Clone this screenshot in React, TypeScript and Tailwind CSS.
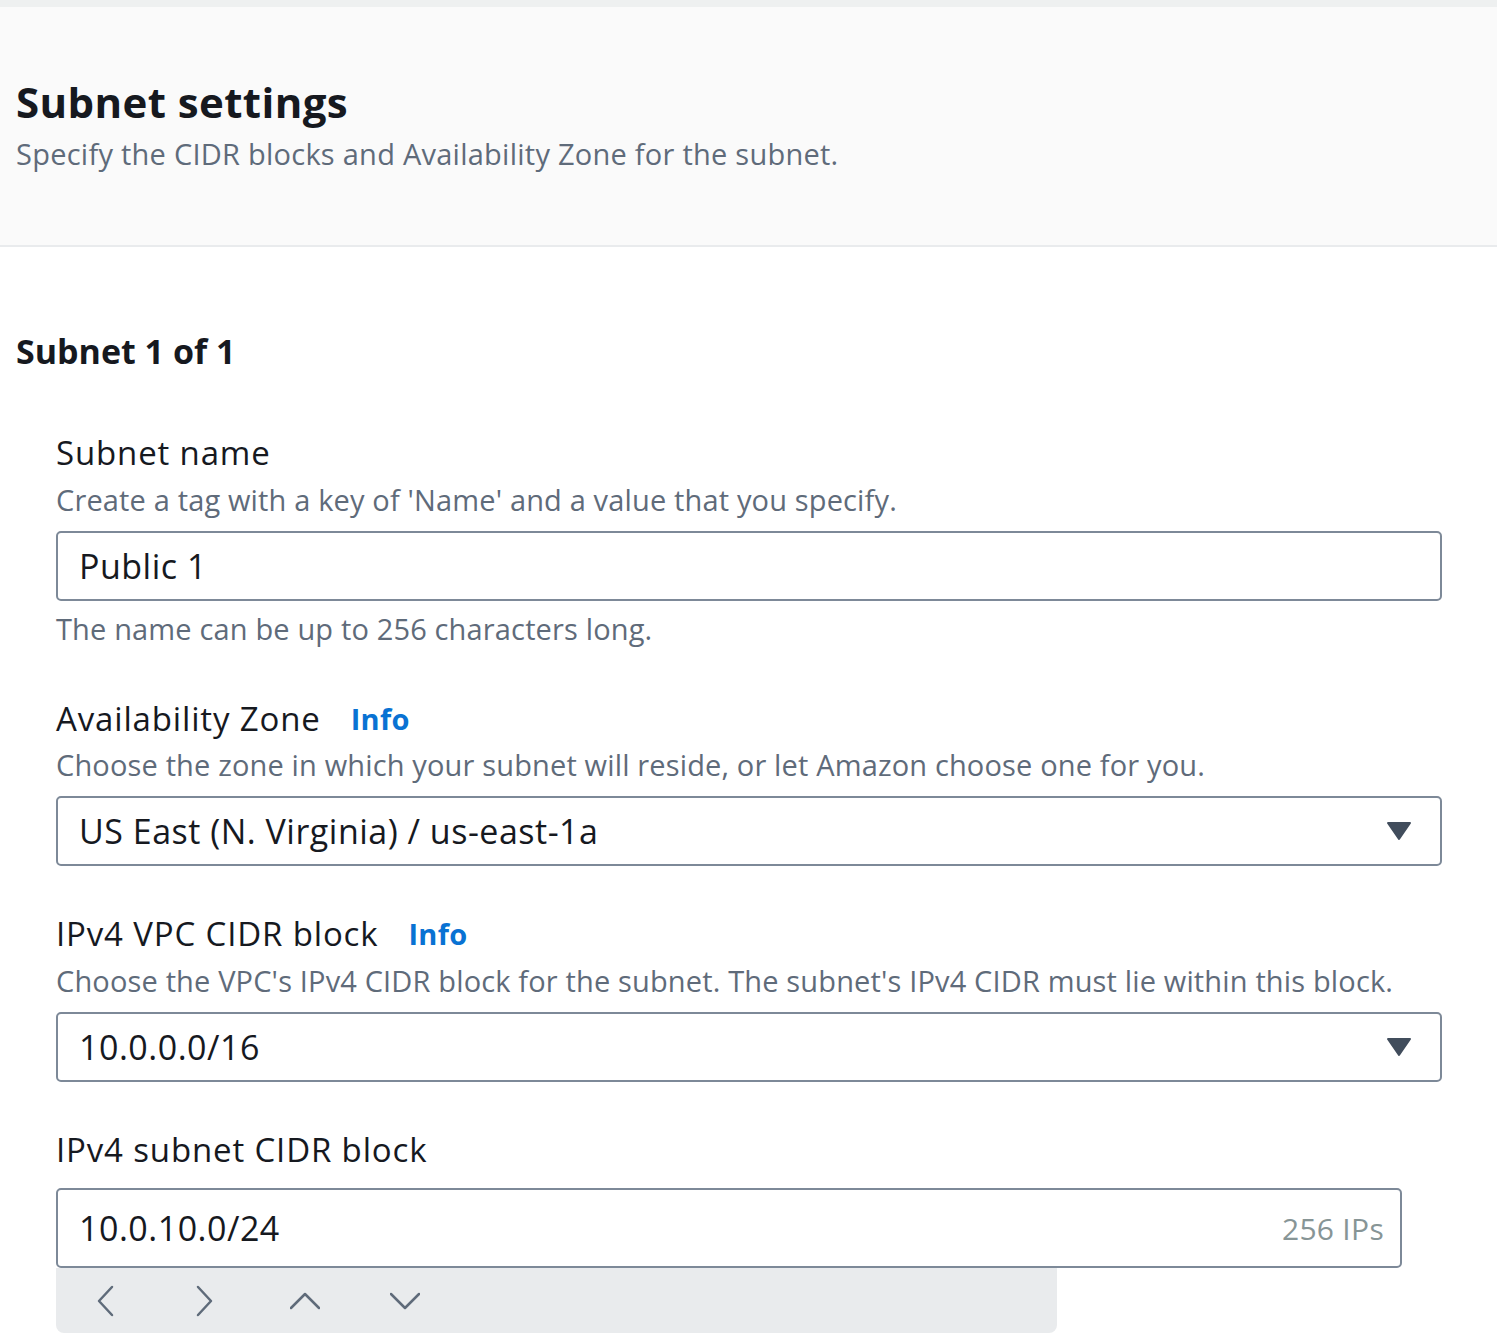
import React from "react";

const font = { fontFamily: '"Open Sans", "Noto Sans", sans-serif' };

function Caret() {
  return (
    <svg width="26" height="20" viewBox="0 0 26 20">
      <path d="M2 2 H24 L13 18 Z" fill="#414d5c" stroke="#414d5c" strokeWidth="2" strokeLinejoin="round" />
    </svg>
  );
}

function Chevron({ d }: { d: string }) {
  return (
    <svg width="30" height="32" viewBox="0 0 30 32" fill="none" stroke="#5f6b7a" strokeWidth="2.5" strokeLinecap="round" strokeLinejoin="round">
      <path d={d} />
    </svg>
  );
}

function Label({ text, info }: { text: string; info?: boolean }) {
  return (
    <div className="flex items-center gap-[30px] text-[33px] leading-[40px] tracking-[0.85px] text-[#16191f]">
      <span>{text}</span>
      {info && <span className="text-[29px] font-bold tracking-[0.3px] text-[#0972d3]">Info</span>}
    </div>
  );
}

function Desc({ text, className = "" }: { text: string; className?: string }) {
  return <div className={`text-[29px] leading-[36px] tracking-[0.15px] text-[#5f6b7a] ${className}`}>{text}</div>;
}

function Select({ value }: { value: string }) {
  return (
    <div className="mt-[13px] flex h-[70px] w-[1386px] items-center justify-between rounded-[5px] border-2 border-[#7d8998] bg-white pl-[21px] pr-[28px] text-[34px] tracking-[0.5px] text-[#16191f]">
      <span>{value}</span>
      <Caret />
    </div>
  );
}

export default function App() {
  return (
    <div className="min-h-screen bg-white" style={font}>
      <div className="h-[7px] bg-[#eef0f0]" />
      <div className="h-[240px] border-b-2 border-[#e9ebed] bg-[#fafafa] px-4 pt-[71px]">
        <h1 className="text-[42px] font-bold leading-[48px] tracking-[0.4px] text-[#16191f]">Subnet settings</h1>
        <p className="mt-[10px] text-[29px] leading-[36px] tracking-[0.25px] text-[#5f6b7a]">
          Specify the CIDR blocks and Availability Zone for the subnet.
        </p>
      </div>

      <div className="px-4">
        <h2 className="mt-[84px] text-[34px] font-bold leading-[40px] text-[#16191f]">Subnet 1 of 1</h2>
      </div>

      <div className="pl-[56px]">
        <div className="mt-[62px]">
          <Label text="Subnet name" />
          <Desc className="mt-[9px]" text="Create a tag with a key of 'Name' and a value that you specify." />
          <div className="mt-[13px] flex h-[70px] w-[1386px] items-center rounded-[5px] border-2 border-[#7d8998] bg-white pl-[21px] text-[34px] tracking-[0.5px] text-[#16191f]">
            Public 1
          </div>
          <Desc className="mt-[10px]" text="The name can be up to 256 characters long." />
        </div>

        <div className="mt-[52px]">
          <Label text="Availability Zone" info />
          <Desc className="mt-[8px]" text="Choose the zone in which your subnet will reside, or let Amazon choose one for you." />
          <Select value="US East (N. Virginia) / us-east-1a" />
        </div>

        <div className="mt-[48px]">
          <Label text="IPv4 VPC CIDR block" info />
          <Desc className="mt-[9px]" text="Choose the VPC's IPv4 CIDR block for the subnet. The subnet's IPv4 CIDR must lie within this block." />
          <Select value="10.0.0.0/16" />
        </div>

        <div className="mt-[48px]">
          <Label text="IPv4 subnet CIDR block" />
          <div className="mt-[18px] flex h-[80px] w-[1346px] items-center justify-between rounded-[5px] border-2 border-[#7d8998] bg-white pl-[21px] pr-[16px] text-[34px] tracking-[0.5px] text-[#16191f]">
            <span>10.0.10.0/24</span>
            <span className="text-[30px] tracking-[0.3px] text-[#879596]">256 IPs</span>
          </div>
          <div className="flex h-[65px] w-[1001px] items-center gap-[70px] rounded-b-[8px] bg-[#e9ebed] pl-[34px]">
            <Chevron d="M22 2 L9 16 L22 30" />
            <Chevron d="M8 2 L21 16 L8 30" />
            <Chevron d="M1 23 L15 9 L29 23" />
            <Chevron d="M1 9 L15 23 L29 9" />
          </div>
        </div>
      </div>
    </div>
  );
}
